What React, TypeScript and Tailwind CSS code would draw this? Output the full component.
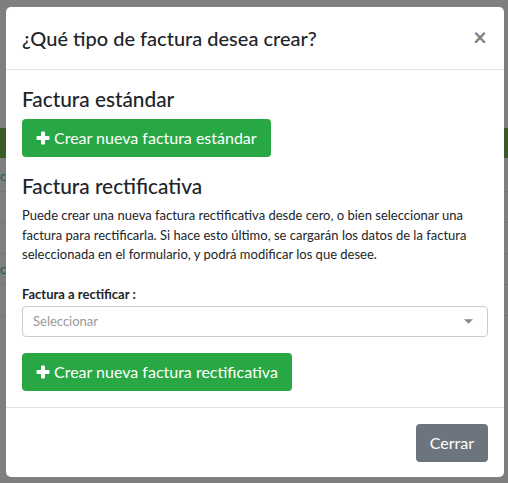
import React from 'react';

function PlusIcon() {
  return (
    <svg viewBox="0 0 14 14" className="w-[14px] h-[14px] mr-[4px] shrink-0" fill="currentColor">
      <rect x="5" y="0.5" width="4" height="13" rx="1" />
      <rect x="0.5" y="5" width="13" height="4" rx="1" />
    </svg>
  );
}

function GreenButton({ label }: { label: string }) {
  return (
    <button className="inline-flex items-center h-[38px] px-[14px] rounded-[4px] bg-[#28a745] text-white text-[16px] leading-none">
      <PlusIcon />
      {label}
    </button>
  );
}

function BgRow({ withLink }: { withLink?: boolean }) {
  return (
    <div className="h-[31px] border-b border-[#747474] flex items-center">
      {withLink && <span className="text-[13px] leading-none text-[#1d5c6b]">c</span>}
    </div>
  );
}

export default function App() {
  return (
    <div
      className="relative w-[508px] h-[483px] bg-[#7f7f7f] overflow-hidden"
      style={{ fontFamily: 'Lato, "Open Sans", sans-serif' }}
    >
      {/* página de fondo (ya oscurecida por el backdrop) */}
      <div className="flex flex-col pt-[128px]">
        <div className="h-[30px] bg-[#3b5a2a]" />
        <div className="h-[3px]" />
        <BgRow withLink />
        <BgRow />
        <BgRow />
        <BgRow withLink />
        <BgRow />
      </div>

      {/* modal */}
      <div className="absolute left-[6px] top-[7px] w-[498px] h-[470px] bg-white rounded-[5px] flex flex-col text-[#212529]">
        <div className="flex items-center justify-between px-[16px] h-[63px] border-b border-[#dee2e6]">
          <h5 className="text-[20px] font-medium leading-[30px]">¿Qué tipo de factura desea crear?</h5>
          <span className="text-[24px] font-bold text-[#808080] leading-none mr-[1px] -mt-[2px]">×</span>
        </div>

        <div className="px-[16px] pt-[16px] pb-[16px] border-b border-[#dee2e6]">
          <h5 className="text-[20.8px] font-medium leading-[25px] mb-[8px]">Factura estándar</h5>
          <GreenButton label="Crear nueva factura estándar" />

          <h5 className="text-[20.8px] font-medium leading-[25px] mt-[16px] mb-[8px]">Factura rectificativa</h5>
          <p className="text-[13px] leading-[19.5px] mb-[20px]">
            Puede crear una nueva factura rectificativa desde cero, o bien seleccionar una factura para rectificarla. Si
            hace esto último, se cargarán los datos de la factura seleccionada en el formulario, y podrá modificar los
            que desee.
          </p>

          <label className="block text-[13px] font-bold leading-[19.5px] mb-[2px]">Factura a rectificar :</label>
          <div className="flex items-center justify-between h-[31px] border border-[#cccccc] rounded-[4px] px-[10px] mb-[16px]">
            <span className="text-[13px] text-[#999999]">Seleccionar</span>
            <svg viewBox="0 0 10 5" className="w-[9px] h-[5px] mr-[4px]" fill="#888">
              <path d="M0 0 L10 0 L5 5 Z" />
            </svg>
          </div>

          <GreenButton label="Crear nueva factura rectificativa" />
        </div>

        <div className="flex justify-end items-start px-[16px] pt-[16px]">
          <button className="h-[38px] px-[14px] rounded-[4px] bg-[#6c757d] text-white text-[16px]">Cerrar</button>
        </div>
      </div>
    </div>
  );
}
